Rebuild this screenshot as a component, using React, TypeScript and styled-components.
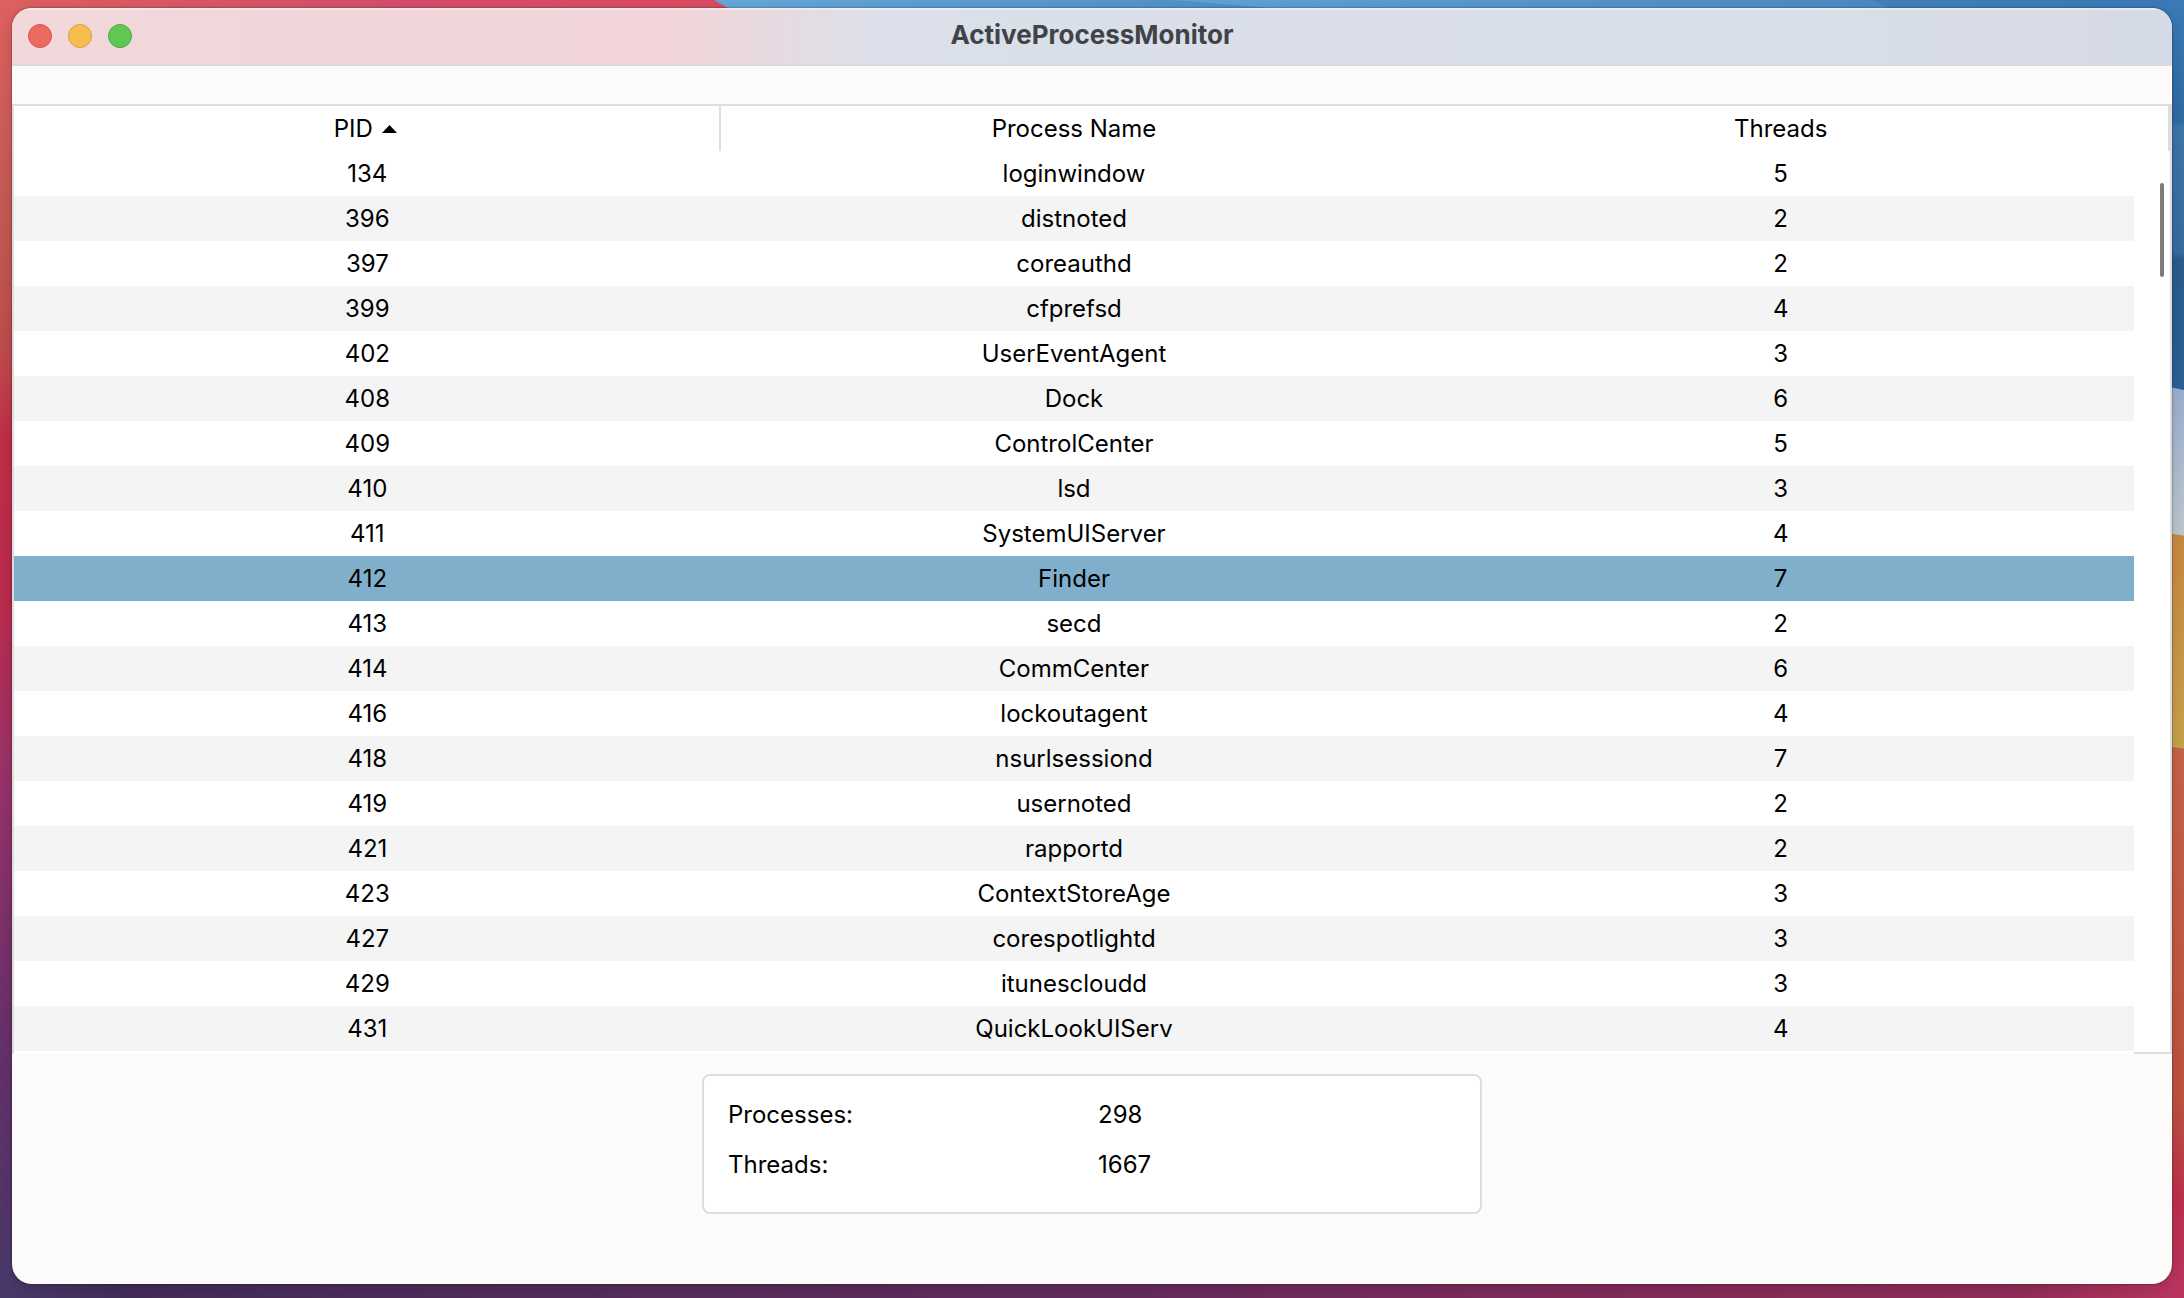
import React, { useState } from "react";
import styled, { createGlobalStyle } from "styled-components";

const LINE = "#dcdddc";

const GlobalStyle = createGlobalStyle`
  *, *::before, *::after { box-sizing: border-box; }
  body {
    margin: 0;
    color: #000;
    font-family: Inter, "Liberation Sans", sans-serif;
    font-size: 24px;
    line-height: 30px;
  }
`;

const Desktop = styled.div`
  position: relative;
  min-height: 100vh;
  display: flex;
  padding: 8px 12px 14px;
  overflow: hidden;
`;

const Wallpaper = styled.svg`
  position: absolute;
  inset: 0;
  width: 100%;
  height: 100%;
`;

const AppWindow = styled.main`
  position: relative;
  flex: 1;
  min-width: 0;
  display: flex;
  flex-direction: column;
  overflow: hidden;
  border-radius: 20px;
  background: #fcfbf9;
  box-shadow: 0 0 2px rgba(0, 0, 0, 0.55), 0 4px 14px rgba(0, 0, 0, 0.15);
`;

const TitleBar = styled.header`
  display: grid;
  grid-template-columns: 1fr auto 1fr;
  align-items: center;
  height: 58px;
  padding: 0 16px;
  border-bottom: 2px solid #dcdad9;
  background: linear-gradient(
    90deg,
    #f2d8da 0%,
    #f1d5d9 31%,
    #e9d9de 34%,
    #dde0ea 40%,
    #d9e0ea 46%,
    #dadee9 58%,
    #d7dfe8 84%,
    #d8dce6 92%,
    #d4dae6 100%
  );
  box-shadow: inset 0 2px 0 rgba(255, 255, 255, 0.45);
`;

const WindowControls = styled.div`
  display: flex;
  gap: 16px;
`;

const ControlDot = styled.button<{ $fill: string; $edge: string }>`
  width: 24px;
  height: 24px;
  padding: 0;
  border: 1px solid ${(p) => p.$edge};
  border-radius: 50%;
  background: ${(p) => p.$fill};
`;

const Title = styled.h1`
  margin: 0;
  padding-bottom: 2px;
  color: #414347;
  font-size: 26px;
  font-weight: 700;
  line-height: 32px;
`;

const TablePane = styled.section`
  position: relative;
  margin-top: 38px;
  padding-bottom: 3px;
  border: solid ${LINE};
  border-width: 2px 2px 0;
  background: #fff;
`;

const ProcessTable = styled.table`
  width: calc(100% - 36px);
  border-collapse: collapse;
  table-layout: fixed;
  text-align: center;
`;

const HeadCell = styled.th<{ $divided?: boolean }>`
  height: 45px;
  padding: ${(p) => (p.$divided ? "0 4px 0 0" : "0")};
  font-weight: 400;
  background: ${(p) =>
    p.$divided ? `linear-gradient(${LINE}, ${LINE}) right / 2px 100% no-repeat` : "none"};
`;

const SortButton = styled.button`
  display: inline-flex;
  align-items: center;
  gap: 9px;
  padding: 0;
  border: 0;
  background: none;
  color: inherit;
  font: inherit;
`;

const Row = styled.tr<{ $selected: boolean }>`
  background: ${(p) => (p.$selected ? "#7fafca" : "#fff")};
  &:nth-child(even) {
    background: ${(p) => (p.$selected ? "#7fafca" : "#f4f4f4")};
  }
`;

const Cell = styled.td`
  height: 45px;
  padding: 0;
`;

const HeaderEdge = styled.div`
  position: absolute;
  top: 0;
  right: 0;
  width: 2px;
  height: 45px;
  background: ${LINE};
`;

const ScrollThumb = styled.div`
  position: absolute;
  top: 77px;
  right: 6px;
  width: 4px;
  height: 94px;
  border-radius: 2px;
  background: #7b7b7b;
`;

const CornerEdge = styled.div`
  position: absolute;
  right: 0;
  bottom: 0;
  width: 36px;
  height: 2px;
  background: ${LINE};
`;

const Summary = styled.dl`
  display: grid;
  grid-template-columns: 1fr 1fr;
  align-content: start;
  row-gap: 20px;
  align-self: center;
  width: 780px;
  max-width: 100%;
  height: 140px;
  margin: 20px 0 0;
  padding: 24px;
  border: 2px solid ${LINE};
  border-radius: 8px;
  background: #fff;
`;

const Term = styled.dt``;

const Value = styled.dd`
  margin: 0;
  padding-left: 6px;
`;

const processes: [number, string, number][] = [
  [134, "loginwindow", 5],
  [396, "distnoted", 2],
  [397, "coreauthd", 2],
  [399, "cfprefsd", 4],
  [402, "UserEventAgent", 3],
  [408, "Dock", 6],
  [409, "ControlCenter", 5],
  [410, "lsd", 3],
  [411, "SystemUIServer", 4],
  [412, "Finder", 7],
  [413, "secd", 2],
  [414, "CommCenter", 6],
  [416, "lockoutagent", 4],
  [418, "nsurlsessiond", 7],
  [419, "usernoted", 2],
  [421, "rapportd", 2],
  [423, "ContextStoreAge", 3],
  [427, "corespotlightd", 3],
  [429, "itunescloudd", 3],
  [431, "QuickLookUIServ", 4],
];

function DesktopWallpaper() {
  return (
    <Wallpaper viewBox="0 0 2184 1298" preserveAspectRatio="none" aria-hidden="true">
      <defs>
        <linearGradient id="left" x1="0" y1="0" x2="0" y2="1">
          <stop offset="0" stopColor="#de6060" />
          <stop offset="0.18" stopColor="#c05a50" />
          <stop offset="0.27" stopColor="#bf4b4d" />
          <stop offset="0.34" stopColor="#c02d47" />
          <stop offset="0.47" stopColor="#b92c4e" />
          <stop offset="0.6" stopColor="#98326a" />
          <stop offset="0.8" stopColor="#67306a" />
          <stop offset="1" stopColor="#47386a" />
        </linearGradient>
        <linearGradient id="topRed" x1="0" y1="0" x2="1" y2="0">
          <stop offset="0" stopColor="#dc605f" />
          <stop offset="0.5" stopColor="#d54e6c" />
          <stop offset="1" stopColor="#dc4a5e" />
        </linearGradient>
        <linearGradient id="topBlue" x1="0" y1="0" x2="1" y2="0">
          <stop offset="0" stopColor="#66a8da" />
          <stop offset="0.36" stopColor="#508fc6" />
          <stop offset="1" stopColor="#3a79b5" />
        </linearGradient>
        <linearGradient id="topBand" x1="0" y1="0" x2="1" y2="0">
          <stop offset="0" stopColor="#62a2d5" />
          <stop offset="1" stopColor="#4a8ac2" />
        </linearGradient>
        <linearGradient id="rightBlue" x1="0" y1="0" x2="0" y2="1">
          <stop offset="0" stopColor="#3a79b5" />
          <stop offset="0.3" stopColor="#306aa3" />
          <stop offset="0.31" stopColor="#3f75a9" />
          <stop offset="0.64" stopColor="#376b9f" />
          <stop offset="0.66" stopColor="#2b5b8d" />
          <stop offset="1" stopColor="#2b6094" />
        </linearGradient>
        <linearGradient id="haze" x1="0" y1="0" x2="0" y2="1">
          <stop offset="0" stopColor="#9badd0" />
          <stop offset="1" stopColor="#bcc8cc" />
        </linearGradient>
        <linearGradient id="gold" x1="0" y1="0" x2="0" y2="1">
          <stop offset="0" stopColor="#c88840" />
          <stop offset="1" stopColor="#c6a24c" />
        </linearGradient>
        <linearGradient id="rust" x1="0" y1="0" x2="0" y2="1">
          <stop offset="0" stopColor="#c4634a" />
          <stop offset="0.65" stopColor="#bd5140" />
          <stop offset="0.82" stopColor="#bc2f4c" />
          <stop offset="1" stopColor="#b8345f" />
        </linearGradient>
        <linearGradient id="bottom" x1="0" y1="0" x2="1" y2="0">
          <stop offset="0" stopColor="#47386a" />
          <stop offset="0.05" stopColor="#422d58" />
          <stop offset="0.32" stopColor="#582d5c" />
          <stop offset="0.5" stopColor="#612b5d" />
          <stop offset="0.68" stopColor="#7c2b5b" />
          <stop offset="0.93" stopColor="#902d58" />
          <stop offset="1" stopColor="#b8345f" />
        </linearGradient>
      </defs>
      <rect width="2184" height="1298" fill="url(#left)" />
      <rect width="760" height="30" x="12" fill="url(#topRed)" />
      <path d="M714 0H2184V30H766Z" fill="url(#topBlue)" />
      <path d="M1175 0H1870L1890 8H1270Z" fill="url(#topBand)" />
      <rect x="2150" y="8" width="34" height="382" fill="url(#rightBlue)" />
      <path d="M2150 383L2184 390V536L2150 532Z" fill="url(#haze)" />
      <path d="M2150 530L2184 536V749L2150 744Z" fill="url(#gold)" />
      <path d="M2150 743L2184 749V1298H2150Z" fill="url(#rust)" />
      <rect x="12" y="1270" width="2160" height="28" fill="url(#bottom)" />
    </Wallpaper>
  );
}

export default function App() {
  const [selected, setSelected] = useState(412);

  return (
    <Desktop>
      <GlobalStyle />
      <DesktopWallpaper />
      <AppWindow>
        <TitleBar>
          <WindowControls>
            <ControlDot $fill="#ed6a5e" $edge="#d4544b" aria-label="Close" />
            <ControlDot $fill="#f4bf50" $edge="#d9a13c" aria-label="Minimize" />
            <ControlDot $fill="#62c655" $edge="#4ca93c" aria-label="Zoom" />
          </WindowControls>
          <Title>ActiveProcessMonitor</Title>
        </TitleBar>
        <TablePane>
          <ProcessTable>
            <thead>
              <tr>
                <HeadCell scope="col" aria-sort="ascending" $divided>
                  <SortButton>
                    PID
                    <svg width="15" height="8" viewBox="0 0 15 8" aria-hidden="true">
                      <path d="M7.5 0L15 8H0Z" fill="#000" />
                    </svg>
                  </SortButton>
                </HeadCell>
                <HeadCell scope="col">
                  <SortButton>Process Name</SortButton>
                </HeadCell>
                <HeadCell scope="col">
                  <SortButton>Threads</SortButton>
                </HeadCell>
              </tr>
            </thead>
            <tbody>
              {processes.map(([pid, name, threads]) => (
                <Row key={pid} $selected={pid === selected} onClick={() => setSelected(pid)}>
                  <Cell>{pid}</Cell>
                  <Cell>{name}</Cell>
                  <Cell>{threads}</Cell>
                </Row>
              ))}
            </tbody>
          </ProcessTable>
          <HeaderEdge />
          <ScrollThumb />
          <CornerEdge />
        </TablePane>
        <Summary>
          <Term>Processes:</Term>
          <Value>298</Value>
          <Term>Threads:</Term>
          <Value>1667</Value>
        </Summary>
      </AppWindow>
    </Desktop>
  );
}
